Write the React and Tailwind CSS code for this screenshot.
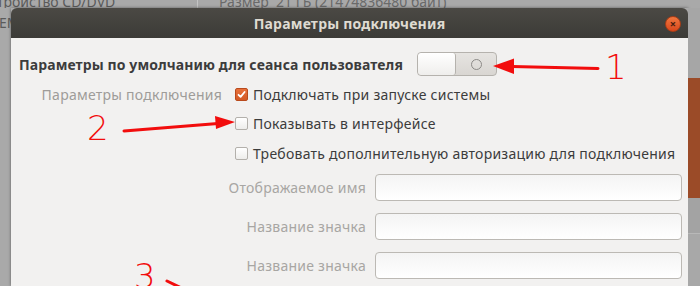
export default function App() {
  const rows = [
    { checked: true, text: 'Подключать при запуске системы', label: 'Параметры подключения' },
    { checked: false, text: 'Показывать в интерфейсе' },
    { checked: false, text: 'Требовать дополнительную авторизацию для подключения' },
  ];
  const fields = ['Отображаемое имя', 'Название значка', 'Название значка'];

  return (
    <div className="relative w-[700px] h-[286px] overflow-hidden bg-[#a9a9a9] font-['Noto_Sans',sans-serif] text-[14px]">
      {/* parent window peeking from behind */}
      <div className="flex h-[8px] overflow-hidden text-[#5b5b5b] leading-none">
        <div className="w-[200px] -mt-[5px] -ml-[3px] whitespace-nowrap">тройство CD/DVD</div>
        <div className="w-px bg-[#c4c4c4]" />
        <div className="-mt-[5px] pl-[21px] whitespace-nowrap text-[#6a6a6a]">
          Размер&nbsp;&nbsp;21 ГБ (21474836480 байт)
        </div>
      </div>

      <div className="flex h-[278px]">
        <div className="w-[11px] overflow-hidden text-[#5b5b5b] pt-[8px] leading-none whitespace-nowrap">
          <span className="-ml-[1px] inline-block">EMU</span>
        </div>

        <div className="w-[677px] flex flex-col shadow-[0_0_3px_rgba(0,0,0,0.45)]">
          <div className="relative h-[30px] rounded-t-[6px] bg-gradient-to-b from-[#4b4944] to-[#3c3b37] flex items-center justify-center">
            <span className="font-bold text-[#dfdbd2] tracking-[0.2px]">Параметры подключения</span>
            <div className="absolute right-[7px] top-[8px] w-[16px] h-[16px] rounded-full bg-gradient-to-b from-[#f0763e] to-[#d9471b] border border-[#a93d17] flex items-center justify-center">
              <span className="text-[#4a2010] text-[11px] leading-none font-bold -mt-px">×</span>
            </div>
          </div>

          <div className="flex-1 bg-[#f2f1f0] text-[#3c3c3c] tracking-[0.25px]">
            <div className="flex items-center pt-[14px] pl-[8px]">
              <div className="w-[398px] font-bold whitespace-nowrap tracking-[0.1px]">
                Параметры по умолчанию для сеанса пользователя
              </div>
              <div className="w-[80px] h-[24px] rounded-[4px] border border-[#b5b2ad] bg-gradient-to-b from-[#e6e4e1] to-[#d9d6d2] flex overflow-hidden">
                <div className="w-[38px] h-full rounded-[3px] border-r border-[#b5b2ad] bg-gradient-to-b from-[#ffffff] to-[#efeeec]" />
                <div className="flex-1 flex items-center justify-center">
                  <div className="w-[11px] h-[11px] rounded-full border-[1.5px] border-[#8c8a87]" />
                </div>
              </div>
            </div>

            <div className="mt-[4px]">
              {rows.map((r, i) => (
                <div key={i} className={`flex items-center ${i === 2 ? 'h-[30px]' : 'h-[29px]'}`}>
                  <div className="w-[211px] text-right text-[#9e9c99] whitespace-nowrap">{r.label}</div>
                  <div
                    className={
                      r.checked
                        ? 'ml-[13px] w-[13px] h-[13px] rounded-[2px] bg-gradient-to-b from-[#e8703a] to-[#d35a26] border border-[#b94a1c] flex items-center justify-center'
                        : 'ml-[13px] w-[13px] h-[13px] rounded-[2px] bg-gradient-to-b from-[#ffffff] to-[#eeedeb] border border-[#b3b0ab]'
                    }
                  >
                    {r.checked && (
                      <svg width="9" height="9" viewBox="0 0 9 9">
                        <path d="M1.5 4.8 L3.6 6.9 L7.6 2" fill="none" stroke="#ffffff" strokeWidth="1.8" strokeLinecap="round" strokeLinejoin="round" />
                      </svg>
                    )}
                  </div>
                  <div className="ml-[5px] whitespace-nowrap">{r.text}</div>
                </div>
              ))}
            </div>

            <div className="mt-[6px] flex flex-col gap-[12px]">
              {fields.map((f, i) => (
                <div key={i} className="flex items-center">
                  <div className="w-[355px] text-right text-[#a8a6a3] whitespace-nowrap">{f}</div>
                  <div className="ml-[9px] w-[307px] h-[27px] rounded-[4px] border border-[#bcb9b4] bg-gradient-to-b from-[#f4f4f4] to-[#ffffff]" />
                </div>
              ))}
            </div>
          </div>
        </div>

        <div className="w-[12px] flex flex-col">
          <div className="h-[70px] bg-[#a6a6a6]" />
          <div className="h-[120px] bg-[#9b4b28]" />
          <div className="h-[35px] bg-[#a3a3a3]" />
          <div className="h-px bg-[#b8b8b8]" />
          <div className="flex-1 bg-[#a8a8a8]" />
        </div>
      </div>

      {/* red annotations */}
      <svg className="absolute inset-0 pointer-events-none" width="700" height="286" viewBox="0 0 700 286">
        <line x1="512" y1="66.5" x2="598" y2="68.5" stroke="#f20d0d" strokeWidth="3" strokeLinecap="round" />
        <polygon points="493,66 514,58.5 514,74" fill="#f20d0d" />
        <line x1="124" y1="131" x2="218" y2="123.5" stroke="#f20d0d" strokeWidth="3" strokeLinecap="round" />
        <polygon points="235,122 215,116 216,129" fill="#f20d0d" />
        <line x1="167" y1="281" x2="200" y2="297" stroke="#f20d0d" strokeWidth="3" strokeLinecap="round" />
      </svg>
      <div className="absolute left-[605px] top-[50px] text-[34px] leading-none text-[#f20d0d] font-['DejaVu_Sans',sans-serif] font-extralight">1</div>
      <div className="absolute left-[87px] top-[111px] text-[34px] leading-none text-[#f20d0d] font-['DejaVu_Sans',sans-serif] font-extralight">2</div>
      <div className="absolute left-[134px] top-[259px] text-[34px] leading-none text-[#f20d0d] font-['DejaVu_Sans',sans-serif] font-extralight">3</div>
    </div>
  );
}
